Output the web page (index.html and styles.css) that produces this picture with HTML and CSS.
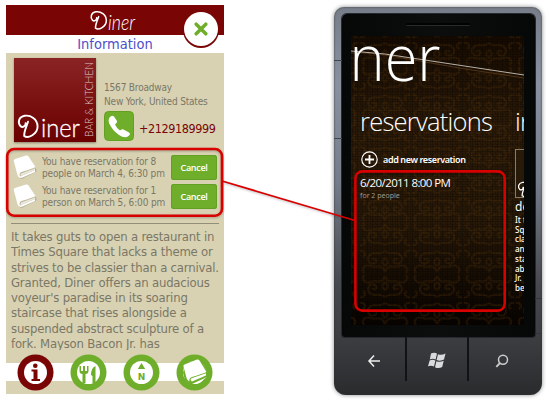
FILE: index.html
```html
<!DOCTYPE html>
<html lang="en">
<head>
<meta charset="utf-8">
<title>Diner</title>
<link rel="stylesheet" href="styles.css">
</head>
<body>
<svg class="defs" width="0" height="0" aria-hidden="true">
  <defs>
    <symbol id="script-d" viewBox="0 0 22 26" overflow="visible">
      <path d="M10.500 8C8.500 14 6 19 6.500 23C10.500 26 20.500 21 20.500 13C20.500 5 13 .8 7 1.800C.5 3 -.5 9 2.500 12.500C5 15 8.500 12 8 9.500" fill="none" stroke="currentColor" stroke-width="2" stroke-linecap="round"/>
    </symbol>
    <symbol id="book" viewBox="0 0 24 24">
      <path d="M1 7Q0 5 2 4L13 .5Q15 0 16 2L22.500 13Q23.500 15 22 16L10 22Q8 24 6 22Q5 20 1 7Z" fill="#bab497" transform="translate(.7 1)"/>
      <path d="M1 7Q0 5 2 4L13 .5Q15 0 16 2L22.500 12Q20 13.500 8.500 17Q5.500 18.500 7 21.500L22 15V17L9.500 22.500Q5.500 24 4.500 20Z" fill="#fff"/>
      <path d="M8 18.500L22 13.300L22 15L8 21Q6.500 20 8 18.500Z" fill="#e9e6da"/>
    </symbol>
  </defs>
</svg>
<main class="stage">
  <section class="app">
    <header class="bar">
      <svg class="bar-logo" width="48" height="24" viewBox="0 0 48 24">
        <use href="#script-d" x="-.5" y="1" width="17" height="21"/>
        <text x="17" y="21" textLength="27" lengthAdjust="spacingAndGlyphs">iner</text>
      </svg>
      <button class="close" aria-label="Close">
        <svg width="14" height="14" viewBox="0 0 14 14"><path d="M2.200 2.200L11.800 11.800M11.800 2.200L2.200 11.800" stroke="#6fae2b" stroke-width="3.500" stroke-linecap="round"/></svg>
      </button>
    </header>
    <h1 class="title">Information</h1>
    <div class="body">
      <div class="venue">
        <svg class="logo" width="82" height="84" viewBox="0 0 82 84">
          <defs><linearGradient id="red" x1="0" y1="0" x2="0" y2="1"><stop offset="0" stop-color="#8a2424"/><stop offset="1" stop-color="#6b0000"/></linearGradient></defs>
          <rect width="82" height="84" fill="url(#red)"/>
          <use href="#script-d" x="4" y="56" width="21" height="25" color="#fff"/>
          <text class="logo-name" x="27" y="79" textLength="39" lengthAdjust="spacingAndGlyphs">iner</text>
          <text class="logo-side" transform="translate(78.500 79) rotate(-90)" textLength="75" lengthAdjust="spacingAndGlyphs">BAR &amp; KITCHEN</text>
        </svg>
        <div class="contact">
          <p class="address">1567 Broadway<br>New York, United States</p>
          <div class="call">
            <svg width="30" height="30" viewBox="0 0 30 30">
              <rect x=".5" y=".5" width="29" height="29" rx="4" fill="#6fae2b" stroke="#62a020"/>
              <path d="M5.500 6.500Q8 3.500 10 5.500L13 10Q13.500 11.500 11 13.500Q12.500 17 16 19.500Q18.500 17.500 19.500 18.500L25 21.500Q27 23 24.500 25Q21 28 15 24Q8 19 5 12Q4 8.500 5.500 6.500Z" fill="#fff"/>
            </svg>
            <span class="number">+2129189999</span>
          </div>
        </div>
      </div>
      <ul class="bookings">
        <li><svg class="bk" width="24" height="24"><use href="#book"/></svg><p>You have reservation for 8<br>people on March 4, 6:30 pm</p><button class="cancel">Cancel</button></li>
        <li><svg class="bk" width="24" height="24"><use href="#book"/></svg><p>You have reservation for 1<br>person on March 5, 6:00 pm</p><button class="cancel">Cancel</button></li>
      </ul>
      <p class="about">It takes guts to open a restaurant in<br>Times Square that lacks a theme or<br>strives to be classier than a carnival.<br>Granted, Diner offers an audacious<br>voyeur's paradise in its soaring<br>staircase that rises alongside a<br>suspended abstract sculpture of a<br>fork. Mayson Bacon Jr. has</p>
    </div>
    <nav class="tabs">
      <svg width="37" height="37" viewBox="0 0 37 37"><circle cx="18.500" cy="18.500" r="18" fill="#7a0505"/><circle cx="18.500" cy="18.500" r="11.500" fill="#fff"/><circle cx="18.300" cy="11.800" r="2.300" fill="#7a0505"/><path d="M14.500 15.500H20.500V25H23V27H14.500V25H16.500V17.500H14.500Z" fill="#7a0505"/></svg>
      <svg width="37" height="37" viewBox="0 0 37 37"><circle cx="18.500" cy="18.500" r="18" fill="#6fae2b"/><circle cx="18.500" cy="18.500" r="11.500" fill="#fff"/><path d="M9.500 12V17Q9.500 20 12.500 20V29H15.500V20Q18.500 20 18.500 17V12H17V17H15V12H13V17H11V12ZM25.500 12Q21 14 21 21L22.500 22V29H25.500Z" fill="#6fae2b"/></svg>
      <svg width="37" height="37" viewBox="0 0 37 37"><circle cx="18.500" cy="18.500" r="18" fill="#6fae2b"/><circle cx="18.500" cy="18.500" r="11.500" fill="#fff"/><path d="M18.500 9L22.200 15H14.800Z" fill="#6fae2b"/><text class="north" x="18.600" y="26" text-anchor="middle">N</text></svg>
      <svg width="37" height="37" viewBox="0 0 37 37"><circle cx="18.500" cy="18.500" r="18" fill="#6fae2b"/><circle cx="18.500" cy="18.500" r="11.500" fill="#fff"/><path d="M7 19L9 9L24 5L33 20L29 25L15 31L9 26Z" fill="#6fae2b"/><path d="M16 30Q22 30.500 27 26L31 23Z" fill="#fff"/><path d="M7.500 12.500Q7 11 8.500 10.500L21 5.500Q22.500 5 23.500 6.500L30.500 18Q27 19.500 16 23Q12.500 24 13.500 27.500Q11.500 27 10.500 24Z" fill="#fff"/><path d="M15.500 24.300L30 19.300V21.500L16 27.500Q13.500 26 15.500 24.300Z" fill="#fff"/></svg>
    </nav>
  </section>

  <section class="phone">
    <i class="seam seam-a"></i><i class="seam seam-b"></i>
    <div class="glass">
      <div class="speaker"></div>
      <div class="screen">
        <svg class="damask" width="173" height="289" viewBox="0 0 173 289">
          <defs>
            <linearGradient id="base" x1="0" y1="0" x2="0" y2="1"><stop offset="0" stop-color="#160b01"/><stop offset=".3" stop-color="#2b1a08"/><stop offset=".65" stop-color="#271807"/><stop offset="1" stop-color="#080300"/></linearGradient>
            <pattern id="weave" width="5" height="5" patternUnits="userSpaceOnUse"><path d="M0 .5H5M0 3.500H3M1.500 0V5M4.500 1V4" stroke="#000" stroke-width=".6" opacity=".4"/></pattern>
            <pattern id="curl" width="52" height="52" patternUnits="userSpaceOnUse" x="8" y="4">
              <g fill="none" stroke="#563309" stroke-width="2.200" opacity=".3">
                <path id="q" d="M26 3C20 8 17 3 12 6C6 10 10 18 16 15C20 12 15 9 13 12M26 24C22 14 17 21 12 18C5 16 2 21 5 25M26 10C23 12 22 15 26 18M1 3C5 2 8 6 4 9"/>
                <use href="#q" transform="matrix(-1 0 0 1 52 0)"/>
                <use href="#q" transform="matrix(1 0 0 -1 0 52)"/>
                <use href="#q" transform="rotate(180 26 26)"/>
              </g>
            </pattern>
          </defs>
          <rect width="173" height="289" fill="url(#base)"/>
          <rect width="173" height="289" fill="url(#curl)"/>
          <rect width="173" height="289" fill="url(#weave)"/>
          <path d="M0 17Q20 16 46 21Q110 33 173 42" fill="none" stroke="#5b3b1c" stroke-width=".8"/>
          <path d="M0 15L34 18L173 39" fill="none" stroke="#c9c2b8" stroke-width=".9"/>
          <text class="brand" x="-1.500" y="45" textLength="91" lengthAdjust="spacingAndGlyphs">ner</text>
        </svg>
        <div class="pane">
          <h2>reservations</h2>
          <div class="add"><svg width="17" height="17" viewBox="0 0 17 17"><circle cx="8.500" cy="8.500" r="7.700" fill="none" stroke="#fff" stroke-width="1.200"/><path d="M8.500 4V13M4 8.500H13" stroke="#fff" stroke-width="1.800"/></svg><span>add new reservation</span></div>
          <div class="when">6/20/2011 8:00 PM</div>
          <div class="who">for 2 people</div>
        </div>
        <div class="peek">
          <h2>in</h2>
          <div class="thumb"><svg width="14" height="17"><use href="#script-d"/></svg></div>
          <h3>de</h3>
          <p>It t<br>Squ<br>cla<br>an<br>stai<br>abs<br>Jr.<br>bev</p>
        </div>
      </div>
    </div>
    <div class="keys">
      <div><svg width="14" height="14" viewBox="0 0 14 14"><path d="M7 1.500L2 7L7 12.500M2 7H13" fill="none" stroke="#eee" stroke-width="1.500"/></svg></div>
      <div><svg width="18" height="17" viewBox="0 0 18 17"><path d="M3 1.500Q6 -.2 9 1.500L7.600 7.500Q4.500 6 1.800 7.400ZM10 2.200Q13.500 3.500 17.500 1.500L16 7.500Q12.500 9.500 8.600 8ZM1.600 8.500Q4.500 7 7.400 8.600L6 14.500Q3 13 0 14.300ZM8.400 9.200Q12 10.500 15.700 8.800L14.200 15Q10.500 17 7 15.200Z" fill="#d9dadc"/></svg></div>
      <div><svg width="14" height="14" viewBox="0 0 14 14"><circle cx="8" cy="5.800" r="4.500" fill="none" stroke="#ccc" stroke-width="1.500"/><path d="M5 9L1.300 12.800" stroke="#ccc" stroke-width="1.800"/></svg></div>
    </div>
  </section>
  <svg class="callouts" width="549" height="400" viewBox="0 0 549 400">
    <g fill="none" stroke="#d90000" stroke-width="2.600"><rect x="7.200" y="149" width="214.800" height="66.700" rx="7"/><rect x="355.400" y="171.400" width="149.300" height="139.200" rx="7"/><path d="M222 181L355 220.500" stroke-width="1.800"/></g>
  </svg>
</main>
</body>
</html>
```
FILE: styles.css
```css
* { box-sizing: border-box; margin: 0; padding: 0; }
body { width: 549px; height: 400px; overflow: hidden; background: #fff; }
button { border: 0; }
.defs { position: absolute; }
.stage { position: relative; display: flex; align-items: flex-start; width: 549px; height: 400px; padding-left: 6px; }
.stage svg { flex: none; display: block; }

.app { width: 218px; height: 389px; margin-top: 5px; background: #d8d2b3; font-family: "DejaVu Sans Condensed", "DejaVu Sans", sans-serif; font-stretch: condensed; color: #7b7766; white-space: nowrap; }
.bar { position: relative; height: 30px; background: #7a0505; padding: 4px 0 0 85px; color: #fff; }
.bar-logo { overflow: visible; }
.bar-logo text { font: italic 300 21px Lato, sans-serif; fill: #fff; }
.close { position: absolute; left: 178px; top: 7px; width: 34px; height: 34px; border-radius: 50%; background: #fff; box-shadow: 0 1px 0 1px #7a0505; display: grid; place-items: center; }
.title { height: 18px; background: #fff; color: #4f4fc8; font-size: 14.500px; font-weight: 400; line-height: 18px; text-align: center; }
.body { height: 310px; padding: 5px 5px 0; }
.venue { display: flex; gap: 8px; padding-left: 3px; }
.logo { box-shadow: 0 1px 2px #8b856a; overflow: visible; }
.logo-name { font: 300 25px Lato, sans-serif; fill: #fff; stroke: #fff; stroke-width: .3px; }
.logo-side { font: 300 11px Lato, sans-serif; fill: #dfc1c1; }
.contact { padding-top: 23px; }
.address { font-size: 10px; line-height: 14px; letter-spacing: -.18px; }
.call { display: flex; align-items: center; gap: 5px; margin-top: 2px; }
.number { color: #7a0505; font-size: 12.500px; letter-spacing: -.4px; padding-top: 5px; }
.bookings { list-style: none; display: grid; gap: 4px; margin-top: 13px; padding: 0 2px; }
.bookings li { display: flex; height: 25px; }
.bookings p { width: 129px; margin-left: 5px; font-size: 10px; line-height: 11.700px; padding-top: 1px; letter-spacing: -.15px; }
.cancel { width: 46px; height: 25px; border-radius: 3px; background: #6fae2b; box-shadow: inset 0 0 0 1px #61a023; color: #fff; font: 600 9px "Open Sans", sans-serif; letter-spacing: -.3px; }
.about { height: 127px; overflow: hidden; margin-top: 14px; padding-top: 5px; border-top: 1px solid #938e78; font-size: 13px; line-height: 15.300px; letter-spacing: -.2px; }
.tabs { display: flex; align-items: center; gap: 16px; height: 18px; padding-left: 10.500px; background: #fff; }

.phone { position: relative; width: 208px; height: 388px; margin: 7px 0 0 110px; padding: 7px 7px 0 8px; border-radius: 10px 10px 12px 12px; background: linear-gradient(#777e89, #8991a0 20%, #767d8a 45%, #45484d 72%, #3d3f43 84%, #292b2d); box-shadow: 0 0 4px #888, inset 0 0 2px #333; font-family: "Noto Sans", sans-serif; }
.seam { position: absolute; background: none; border: solid #42474f; border-width: 1px 0; }
.seam-a { left: 0; top: 53px; width: 8px; height: 79px; }
.seam-b { right: 0; top: 291px; width: 7px; height: 36px; border-color: #33363a; }
.glass { height: 323px; padding: 9px 9px 0; background: linear-gradient(90deg, #060707, #0c0e0e 50%, #060707); border-radius: 5px 5px 3px 3px; box-shadow: 0 0 0 1px #25282c; }
.speaker { width: 64px; height: 3px; margin-left: 55px; border-radius: 2px; background: #020202; border-bottom: 1px solid #292b2b; }
.screen { position: relative; display: flex; width: 173px; height: 289px; margin-top: 10px; overflow: hidden; color: #fff; white-space: nowrap; }
.damask { position: absolute; left: 0; top: 0; overflow: visible; }
.brand { font: 300 65px "Open Sans", sans-serif; fill: #fff; }
.pane, .peek { position: relative; padding-top: 67px; flex: none; }
.pane { width: 164px; padding-left: 9px; }
.screen h2 { font: 300 25.500px/36px "Open Sans", sans-serif; letter-spacing: -.75px; }
.add { display: flex; align-items: center; gap: 5px; height: 17px; margin: 12px 0 0 1px; font-size: 9px; font-weight: 600; letter-spacing: -.38px; }
.when { margin-top: 6px; font: 11.500px/17px "Open Sans", sans-serif; letter-spacing: -.6px; }
.who { font-size: 7px; line-height: 9px; color: #a09a90; }
.thumb { width: 30px; height: 49px; margin-top: 10px; border: 1px solid #887c65; padding: 31px 0 0 2px; background: #281a09; }
.peek h3 { font-size: 12px; font-weight: 400; line-height: 16px; margin-top: 1px; }
.peek p { font-size: 8px; line-height: 9.700px; font-weight: 500; }
.keys { display: grid; grid-template-columns: 65px 62px 66px; height: 44px; }
.keys div { display: grid; place-items: center; padding-top: 3px; border-right: 2px solid #111214; }
.keys div:last-child { border: 0; }
.north { font: 700 9px "DejaVu Sans", sans-serif; fill: #6fae2b; }
.callouts { position: absolute; left: 0; top: 0; filter: drop-shadow(0 1px 1px rgba(0,0,0,.25)); }
```
